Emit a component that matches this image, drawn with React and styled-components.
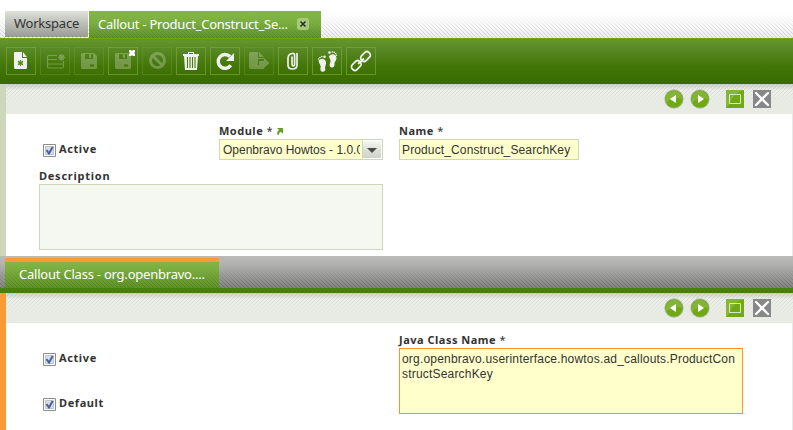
import React from "react";
import styled, { createGlobalStyle } from "styled-components";

const UI = `"Noto Sans", "Open Sans", sans-serif`;
const ARIAL = `"Liberation Sans", Arial, sans-serif`;
const hatch = (c, angle = 45) => `repeating-linear-gradient(${angle}deg, ${c} 0 1px, transparent 1px 2.83px)`;

const Global = createGlobalStyle`
  * { box-sizing: border-box; }
  body { margin: 0; background: #fff; overflow: hidden; }
`;

const Window = styled.main`
  width: 793px;
  height: 430px;
  display: flex;
  flex-direction: column;
  overflow: hidden;
  color: #333;
  font-family: ${UI};
`;

const TabBar = styled.nav`
  flex: none;
  height: 38px;
  padding: 11px 0 0 5px;
  display: flex;
  gap: 1px;
  background: linear-gradient(#fff 14px, rgba(255, 255, 255, 0.1) 38px), ${hatch("#c6c6c6")}, #ececec;
`;

const Tab = styled.div`
  width: ${(p) => p.$width}px;
  height: ${(p) => (p.$active ? 27 : 26)}px;
  padding: 0 12px 2px 9px;
  display: flex;
  align-items: center;
  justify-content: space-between;
  font-size: 13px;
  line-height: 24px;
  letter-spacing: -0.23px;
  white-space: nowrap;
  color: ${(p) => (p.$active ? "#fff" : "#333")};
  background: ${(p) =>
    p.$active
      ? `linear-gradient(#84b749 0, #7bae3f 12px, rgba(91, 142, 38, 0.72) 27px), ${hatch("#36640e")}, #70a136`
      : `linear-gradient(#dfe1db 0, #c5c8c0 9px, rgba(154, 158, 148, 0.8) 25px), ${hatch("#777a70")}, #a8aca2`};
`;

const TabClose = styled.span`
  width: 12px;
  height: 12px;
  border-radius: 3px;
  background: #a5ca7d;
  display: flex;
`;

const Toolbar = styled.div`
  flex: none;
  height: 46px;
  padding: 8px 0 0 6px;
  display: flex;
  gap: 4px;
  border-top: 1px solid #70a516;
  background: linear-gradient(#65962e 0, #588925 10px, #437608 27px, #386b00 45px);
`;

const ToolButton = styled.button`
  width: 30px;
  height: 28px;
  padding: 0;
  border: 1px solid ${(p) => (p.$off ? "rgba(120, 166, 61, 0.32)" : "rgba(130, 176, 66, 0.58)")};
  background: none;
  display: flex;
  svg { margin: -1px; opacity: ${(p) => (p.$off ? 0.28 : 1)}; }
`;

const Pane = styled.section`
  flex: none;
  height: ${(p) => p.$height}px;
  border-left: 6px solid ${(p) => p.$edge};
  background: linear-gradient(#e9e9e9, #e9e9e9) right / 1px 100% no-repeat #fff;
`;

const PaneHeader = styled.header`
  height: 30px;
  padding: 5px 21px 0 0;
  display: flex;
  justify-content: flex-end;
  background: linear-gradient(rgba(180, 183, 176, 0.6) 0, rgba(232, 235, 227, 0.3) 6px, #e8ebe3 20px), ${hatch("#d2d5ce", -45)}, #eef0ea;
`;

const Nav = styled.span`
  display: flex;
  width: 20px;
  height: 20px;
  margin-left: ${(p) => p.$gap}px;
`;

const Form = styled.div`
  display: grid;
  grid-template-columns: 180px 180px 344px;
  grid-template-rows: ${(p) => p.$rows};
  padding: ${(p) => p.$top}px 0 0 33px;
`;

const Field = styled.div`
  grid-column: ${(p) => p.$column};
  width: ${(p) => p.$width}px;
`;

const Label = styled.label`
  display: flex;
  align-items: center;
  height: 16px;
  font-size: 11px;
  font-weight: 700;
  line-height: 16px;
  letter-spacing: ${(p) => p.$spacing || 0.5}px;
  white-space: pre;
`;

const Required = styled.span`
  font-weight: 400;
`;

const Check = styled.div`
  grid-column: 1;
  grid-row: ${(p) => p.$row || "auto"};
  height: 16px;
  padding-left: 4px;
  display: flex;
  gap: 3px;
  margin-top: ${(p) => p.$shift}px;
  svg { margin-top: 3px; }
`;

const Input = styled.div`
  height: 21px;
  border: 1px solid #cdd7bb;
  background: #ffffcc;
  padding-left: 2px;
  display: flex;
  font: 12px/20px ${ARIAL};
  letter-spacing: 0.13px;
  white-space: nowrap;
`;

const SelectText = styled.span`
  width: 138px;
  padding-left: 1px;
  overflow: hidden;
  letter-spacing: 0;
`;

const SelectArrow = styled.span`
  margin-left: auto;
  width: 20px;
  height: 19px;
  border: 1px solid #fff;
  border-left-color: #cdd7bb;
  background: linear-gradient(#f5f7f3, #d9ddd5 60%, #cfd3ca);
  display: flex;
`;

const Area = styled.div`
  height: 66px;
  padding: 3px 2px 2px;
  border: 1px solid ${(p) => (p.$focused ? "#fb9331" : "#cdd7bb")};
  background: ${(p) => (p.$focused ? "#ffffcc" : "#f5f8f0")};
  font: 12px/15px ${ARIAL};
  letter-spacing: 0.19px;
  white-space: pre-line;
`;

const ChildBar = styled.nav`
  flex: none;
  height: 37px;
  padding: 2px 0 0 5px;
  border-style: solid;
  border-width: 0 0 5px;
  border-image: linear-gradient(#65952c 0, #477d0c 100%) 5;
  background: linear-gradient(#bbbbba 0, #b0b0ae 9px, rgba(120, 120, 117, 0.72) 32px), ${hatch("#444")}, #a0a09d;
`;

const ChildTab = styled.div`
  width: 214px;
  height: 30px;
  padding-left: 14px;
  border-top: 3px solid #fb9a35;
  color: #fff;
  font-size: 13px;
  line-height: 26px;
  letter-spacing: -0.22px;
  white-space: nowrap;
  box-shadow: inset 0 1px #fb9a35;
  background: linear-gradient(#84b749 0, #7bae3f 8px, rgba(91, 142, 38, 0.72) 26px), ${hatch("#36640e")}, #70a136;
`;

const shape = { width: 30, height: 28, viewBox: "0 0 30 28", fill: "none" };
const FILL = "#f0f1ee";

const Disk = () => (
  <path fillRule="evenodd" fill={FILL} d="M7 7.500Q7 6 8.500 6H20l3 3v11.500q0 1.500-1.500 1.500h-13Q7 22 7 20.500zM11 7v5h8V7h-2v4h-2V7zM16 17.500h4v2h-4z" />
);

const tools = [
  { name: "new", icon: (
    <>
      <path fill={FILL} d="M9 5h7v6h5v9.500Q21 22 19.500 22h-10Q8 22 8 20.500V6q0-1 1-1zM17 5l4 5h-4z" />
      <path stroke="#559112" strokeWidth="1.200" d="M14.500 13v6M12 14l5 4M17 14l-5 4M12 16h5" />
    </>
  ) },
  { name: "new row", off: true, icon: (
    <>
      <path stroke={FILL} strokeWidth="1.200" d="M17 8.500H9q-1.500 0-1.500 1.500v9.500Q7.500 21 9 21h13q1.500 0 1.500-1.500V14M8 12.500h9M8 17h15" />
      <circle cx="21.500" cy="10.500" r="2.500" stroke={FILL} />
      <path stroke={FILL} d="M21.500 7v7M18 10.500h7M19 8l5 5M24 8l-5 5" />
    </>
  ) },
  { name: "save", off: true, icon: <Disk /> },
  { name: "save and close", icon: (
    <>
      <g opacity=".28"><Disk /></g>
      <path fill="#fff" d="M21 3h2l1 1 1-1h2v2l-1 1 1 1v2h-2l-1-1-1 1h-2V7l1-1-1-1z" />
    </>
  ) },
  { name: "undo", off: true, icon: (
    <>
      <circle cx="15.500" cy="13.500" r="7" stroke={FILL} strokeWidth="3" />
      <path stroke={FILL} strokeWidth="3" d="M11 9l9 9" />
    </>
  ) },
  { name: "delete", icon: (
    <>
      <path fill={FILL} d="M12 5h6v2h5v2H7V7h5zM8 9h14l-1 14H9z" />
      <path stroke="#477d0c" strokeWidth="1.100" d="M11.500 10v11M14 10v11M16.500 10v11M19 10v11" />
      <path fill="#477d0c" d="M13 6h4v1h-4z" />
    </>
  ) },
  { name: "refresh", icon: (
    <>
      <path stroke={FILL} strokeWidth="3.400" d="M20 9.500A6.900 6.900 0 1 0 20.800 18.300" />
      <path fill={FILL} d="M24 6v8h-8z" />
    </>
  ) },
  { name: "export", off: true, icon: (
    <path fill={FILL} d="M6 5h8v6h6v1h-6v6h6v4H7q-2 0-2-2V6zM15 5l5 5h-5zM15 14h5v-3l5.500 5-5.500 5v-3h-5z" />
  ) },
  { name: "attachments", icon: (
    <path stroke={FILL} strokeWidth="1.700" strokeLinecap="round" d="M14 10v7.500q0 1.500 1.300 1.500t1.300-1.500V8.500Q16.600 6 14 6.500q-3.500.5-4 4V18q0 4 4.500 4t4.500-4V6.500" />
  ) },
  { name: "audit trail", icon: (
    <>
      <path fill={FILL} d="M6.500 13.500q3-3 6-1 2.500 2.500 1 6-1 2 0 4-.5 2.500-3 2.300-2.500-.3-2-3.300.5-2.500-.5-4t-1.500-4zM17 9q3-3 6.500-.8 2 2.800 0 5.800-2 2.500-1 4.500-1 3-4 1.500-1.700-1.500-.2-4.500.8-2-.3-3.500T17 9z" />
      <g fill={FILL}>
        <circle cx="6.800" cy="12" r=".8" /><circle cx="8" cy="10.500" r=".8" /><circle cx="9.800" cy="9.600" r=".8" /><circle cx="12.500" cy="9.800" r="1.300" />
        <circle cx="17.500" cy="5.500" r="1.300" /><circle cx="20.300" cy="5" r=".8" /><circle cx="22.200" cy="5.400" r=".8" /><circle cx="23.700" cy="6.600" r=".8" /><circle cx="24.500" cy="8.300" r=".7" />
      </g>
    </>
  ) },
  { name: "link", icon: (
    <g stroke={FILL} strokeWidth="1.700">
      <rect x="-5.200" y="-3.300" width="10.400" height="6.600" rx="2.800" transform="translate(10.300 18.500) rotate(-45)" />
      <rect x="-5.200" y="-3.300" width="10.400" height="6.600" rx="2.800" transform="translate(19.500 9.500) rotate(-45)" />
      <path d="M12 17l6-5.500" />
    </g>
  ) },
];

const Round = ({ back }) => (
  <svg width="20" height="20">
    <circle cx="10" cy="10" r="9.700" fill="#b4baa9" />
    <circle cx="10" cy="10" r="8.800" fill="#70aa13" />
    <path d="M2 10a8 8 0 0 1 16 0Q9 7 2 14z" fill="#8dba4d" opacity=".65" />
    <path d={back ? "M12 6v8l-6-4z" : "M8 6v8l6-4z"} fill="#fff" />
  </svg>
);

const HeaderTools = () => (
  <PaneHeader>
    <Nav $gap={0}><Round back /></Nav>
    <Nav $gap={6}><Round /></Nav>
    <Nav $gap={15}>
      <svg width="20" height="20">
        <path d="M1 1h18v18H1z" fill="#70aa13" />
        <path d="M1 1h18Q8 4 4 16l-3 3z" fill="#91bd4b" opacity=".65" />
        <path d="M4.500 5.500h11v9h-11z" fill="none" stroke="#d9eac2" />
      </svg>
    </Nav>
    <Nav $gap={7}>
      <svg width="20" height="20">
        <path d="M1 1h18v18H1z" fill="#878787" />
        <path d="M4 4l12 12M16 4L4 16" stroke="#fff" strokeWidth="2.300" strokeLinecap="round" />
      </svg>
    </Nav>
  </PaneHeader>
);

const CheckField = ({ children, row, shift = 0 }) => (
  <Check $row={row} $shift={shift}>
    <svg width="13" height="13">
      <path d="M.5.5h12v12H.5z" fill="#fff" stroke="#8c8f91" />
      <path d="M2.500 2.500h8v8h-8z" fill="#d9dde5" stroke="#bec3cc" />
      <path d="M3.500 6.200l2.500 3.300L9.700 3" fill="none" stroke="#4560a5" strokeWidth="2" />
    </svg>
    <Label $spacing={0.6}>{children}</Label>
  </Check>
);

export default function App() {
  return (
    <Window>
      <Global />
      <TabBar>
        <Tab $width={83}>Workspace</Tab>
        <Tab $active $width={232}>
          Callout - Product_Construct_Se...
          <TabClose>
            <svg width="12" height="12"><path d="M3.500 3.500l5 5M8.500 3.500l-5 5" stroke="#26351b" strokeWidth="1.600" /></svg>
          </TabClose>
        </Tab>
      </TabBar>
      <Toolbar>
        {tools.map((t) => (
          <ToolButton key={t.name} aria-label={t.name} $off={t.off}>
            <svg {...shape}>{t.icon}</svg>
          </ToolButton>
        ))}
      </Toolbar>
      <Pane $height={172} $edge="#cdd7bb">
        <HeaderTools />
        <Form $top={9} $rows="45px 82px">
          <CheckField row={1} shift={18}>Active</CheckField>
          <Field $column={2} $width={164}>
            <Label>
              Module <Required>* </Required>
              <svg width="7" height="8"><path d="M1 1h6v6L5 5Q3 5 3 8L1 7Q1 4 3 3z" fill="#65a22a" /></svg>
            </Label>
            <Input>
              <SelectText>Openbravo Howtos - 1.0.0</SelectText>
              <SelectArrow><svg width="18" height="17"><path d="M4 7h10l-5 5z" fill="#484d45" /></svg></SelectArrow>
            </Input>
          </Field>
          <Field $column={3} $width={180}>
            <Label>Name <Required>*</Required></Label>
            <Input>Product_Construct_SearchKey</Input>
          </Field>
          <Field $column="1 / 3" $width={344}>
            <Label $spacing={0.75}>Description</Label>
            <Area />
          </Field>
        </Form>
      </Pane>
      <ChildBar>
        <ChildTab>Callout Class - org.openbravo....</ChildTab>
      </ChildBar>
      <Pane $height={137} $edge="#fb9a35">
        <HeaderTools />
        <Form $top={9} $rows="63px 30px">
          <CheckField row={1} shift={18}>Active</CheckField>
          <Field $column={3} $width={344}>
            <Label>Java Class Name <Required>*</Required></Label>
            <Area $focused>
              {"org.openbravo.userinterface.howtos.ad_callouts.ProductCon\nstructSearchKey"}
            </Area>
          </Field>
          <CheckField row={2}>Default</CheckField>
        </Form>
      </Pane>
    </Window>
  );
}
